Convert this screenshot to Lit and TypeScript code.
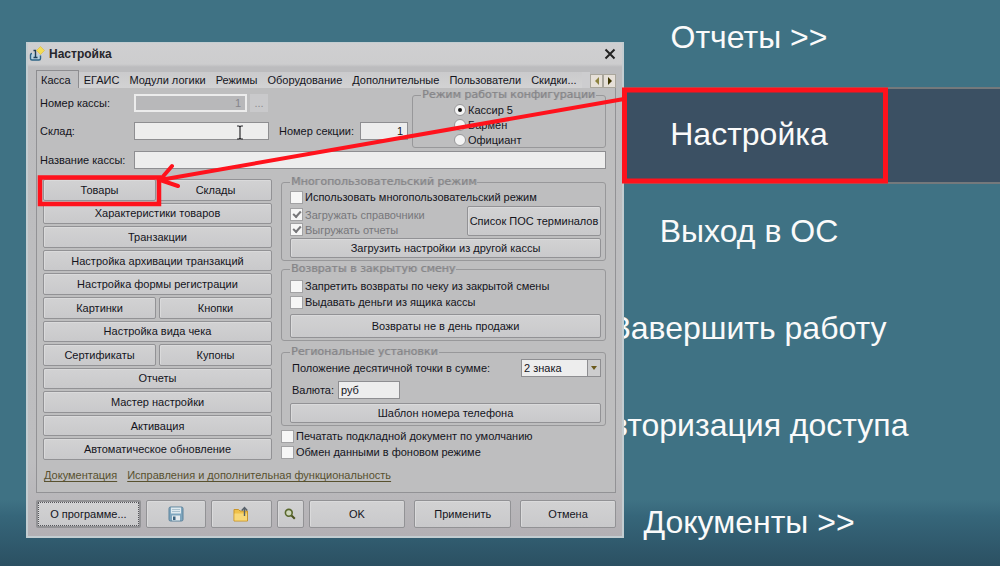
import { LitElement, html, css, svg } from "lit";
import { customElement, state } from "lit/decorators.js";
import { classMap } from "lit/directives/class-map.js";

const MENU = ["Отчеты >>", "Настройка", "Выход в ОС", "Завершить работу", "Авторизация доступа", "Документы >>"];
const TABS = ["Касса", "ЕГАИС", "Модули логики", "Режимы", "Оборудование", "Дополнительные", "Пользователи", "Скидки..."];
const MODES = ["Кассир 5", "Бармен", "Официант"];
const ACTIONS: string[][] = [
  ["Товары", "Склады"],
  ["Характеристики товаров"],
  ["Транзакции"],
  ["Настройка архивации транзакций"],
  ["Настройка формы регистрации"],
  ["Картинки", "Кнопки"],
  ["Настройка вида чека"],
  ["Сертификаты", "Купоны"],
  ["Отчеты"],
  ["Мастер настройки"],
  ["Активация"],
  ["Автоматическое обновление"],
];

@customElement("settings-dialog")
export class SettingsDialog extends LitElement {
  @state() private tab = "Касса";

  static styles = css`
    :host {
      display: block;
      box-sizing: border-box;
      padding: 0 6px 8px 8px;
      border: 2px solid #c3cdd1;
      border-width: 1px 2px 2px 2px;
      background: linear-gradient(#cfcfd1 0, #cdcdce 21px, #bcbcbe 24px, #bebec0 85%, #b3b0b4 100%);
      color: #14141c;
      font: 11px/14px "Liberation Sans", Arial, sans-serif;
    }
    button, input, select { font: inherit; color: inherit; box-sizing: border-box; margin: 0; }
    button { padding: 0; cursor: pointer; }
    .title { display: flex; align-items: center; height: 21px; gap: 4px; margin-left: -7px; }
    .title h1 { flex: 1; margin: 0; font: 700 12px/14px "Liberation Sans", sans-serif; color: #26262c; }
    .close { display: flex; border: 0; background: none; }
    .tabs { display: flex; align-items: flex-end; height: 18px; margin: 6px 0 -1px; position: relative; }
    .tab { border: 0; background: linear-gradient(#cacacc, #d2d2d3); height: 16px; padding: 0 5px; white-space: nowrap; }
    .tab.on { height: 18px; background: #bfbfc1; border: 1px solid #8d8d90; border-bottom: 0; padding: 0 7px 0 4px; }
    .fill { flex: 1; height: 16px; background: #cdcdcf; }
    .step { display: grid; place-items: center; flex: none; width: 13px; height: 14px; border: 1px solid #a9a69c; background: #e6e0d8; }
    .panel { border: 1px solid #929295; padding: 0 9px 10px 3px; background: #bebebf; }
    .head { display: flex; gap: 4px; }
    .fields { flex: 1; display: flex; flex-direction: column; gap: 10px; padding-top: 6px; }
    .line { display: flex; align-items: center; height: 18px; }
    .line > .lead { width: 94px; }
    .box { height: 18px; border: 1px solid #8e8e91; background: #ededed; padding: 0 4px; min-width: 0; border-radius: 0; }
    .num { text-align: right; }
    .code { width: 113px; border: 2px solid #ececec; background: #b8b8ba; color: #85858a; }
    .more { width: 18px; height: 18px; margin-left: 3px; border: 0; background: #c9c9cb; color: #8c8c8e; }
    .store { width: 135px; margin-right: 10px; }
    .section { width: 48px; margin-left: auto; }
    .grow { flex: 1; }
    .name { margin-top: 3px; }
    fieldset {
      box-sizing: border-box; margin: 0; min-width: 0; border: 1px solid #98989a; border-radius: 3px; padding: 0 4px 2px 8px;
    }
    legend {
      height: 14px; padding: 0 1px; font: 11px/14px "DejaVu Sans", sans-serif; color: #848487; text-shadow: 1px 0 0 #a4a4a6; white-space: nowrap;
    }
    .modes { width: 194px; padding: 0; }
    .modes legend { margin-left: 8px; }
    .mode { margin-left: 41px; }
    label { display: flex; align-items: center; white-space: nowrap; }
    .mode { height: 15px; gap: 2px; }
    .radio { appearance: none; width: 12px; height: 12px; border: 1px solid #98989a; border-radius: 50%; background: #f4f4f4; display: grid; place-items: center; }
    .radio:checked::before { content: ""; width: 4px; height: 4px; border-radius: 50%; background: #111; }
    .check { appearance: none; width: 13px; height: 13px; margin-right: 2px; background: #f6f6f6; border: 1px solid #a2a2a4; display: grid; place-items: center; flex: none; }
    .check:checked::before { content: ""; width: 6px; height: 3px; border: solid #77777a; border-width: 0 0 2px 2px; transform: translateY(-1px) rotate(-48deg); }
    .tick { height: 16px; }
    .tick.dim { height: 15px; color: #77777b; }
    .btn {
      border: 1px solid #929295; border-radius: 2px; background: linear-gradient(#d2d2d3, #c9c9cb); box-shadow: inset 1px 1px 0 #dadadb; white-space: nowrap; display: grid; place-items: center;
    }
    .body { display: grid; grid-template-columns: 230px minmax(0, 1fr); gap: 9px; margin: 6px 0 0 2px; }
    .actions { display: grid; grid-template-rows: repeat(12, minmax(0, 1fr)); gap: 2px; margin: 4px 0 1px 1px; }
    .pair { display: grid; grid-auto-flow: column; grid-auto-columns: minmax(0, 1fr); gap: 3px; }
    .groups { display: flex; flex-direction: column; }
    .multi { display: flex; height: 30px; margin: 1px 0 2px; }
    .multi div { flex: 1; padding-top: 1px; }
    .multi .btn { width: 134px; }
    .wide { width: 100%; height: 20px; }
    .tall { height: 24px; margin-top: 4px; }
    .returns { margin-top: 1px; padding-top: 2px; }
    .region { margin-top: 4px; }
    .region .line { justify-content: space-between; margin-bottom: 4px; padding-left: 2px; }
    .region .currency { justify-content: flex-start; gap: 4px; }
    .currency .box { width: 62px; padding: 0 2px; }
    .combo { position: relative; width: 80px; height: 18px; }
    .combo select { appearance: none; width: 100%; height: 18px; border: 1px solid #8e8e91; background: linear-gradient(90deg, #ededed 65px, #8e8e91 65px 66px, #cdcdce 66px); padding: 0 2px; border-radius: 0; }
    .combo svg { position: absolute; right: 4px; top: 7px; pointer-events: none; }
    .extra { margin: 2px 0 1px; }
    .links { display: flex; gap: 10px; margin: 7px 0 0 4px; }
    a { color: #58512f; text-decoration: underline; text-underline-offset: 2px; white-space: nowrap; }
    .footer { display: grid; grid-template-columns: 105fr 60fr 61fr 27fr 97fr 101fr 100fr; margin-top: 7px; height: 28px; column-gap: 5px; }
    .apart { margin-left: 4px; }
    .about { outline: 1px dotted #55555a; outline-offset: -3px; border-width: 2px; }
    svg { display: block; }
  `;

  private check(text: string, on = false, off = false) {
    return html`<label class=${classMap({ tick: true, dim: off })}
      ><input class="check" type="checkbox" .checked=${on} ?disabled=${off} />${text}</label
    >`;
  }

  render() {
    return html`
      <div class="title">
        <svg width="16" height="16" viewBox="0 0 16 16">
          <path d="M3 7.500c-1 0-1.500 0.500-1.500 1.500v3.500c0 1 0.500 1.500 1.500 1.500h7c1 0 1.500-0.500 1.500-1.500V9.500" fill="#b9d3e0" stroke="#2d6486" stroke-width="1.400" />
          <path d="M6.500 11.500V4.500H4.500M4.500 11.500h4" fill="none" stroke="#1f3f57" stroke-width="1.400" />
          <path d="M11.500 0.500l4 4-4 4-4-4z" fill="#f3dc55" stroke="#d9b93a" stroke-width="0.600" />
        </svg>
        <h1>Настройка</h1>
        <button class="close" aria-label="Закрыть">
          <svg width="12" height="12" viewBox="0 0 12 12"><path d="M1.500 1.500l9 9M10.500 1.500l-9 9" stroke="#222" stroke-width="2" /></svg>
        </button>
      </div>

      <div class="tabs" role="tablist">
        ${TABS.map(
          (t) => html`<button role="tab" class=${classMap({ tab: true, on: t === this.tab })}
            aria-selected=${t === this.tab} @click=${() => (this.tab = t)}>${t}</button>`
        )}
        <span class="fill"></span>
        <button class="step" aria-label="Назад"><svg width="6" height="8"><path d="M5 0v8L1 4z" fill="#8d8340" /></svg></button>
        <button class="step" aria-label="Вперед"><svg width="6" height="8"><path d="M1 0v8l4-4z" fill="#3d3500" /></svg></button>
      </div>

      <div class="panel">
        <div class="head">
          <div class="fields">
            <div class="line">
              <label class="lead" for="code">Номер кассы:</label>
              <input id="code" class="box num code" value="1" disabled />
              <button class="more" disabled>...</button>
            </div>
            <div class="line">
              <label class="lead" for="store">Склад:</label>
              <input id="store" class="box store" />
              <label for="section">Номер секции:</label>
              <input id="section" class="box num section" value="1" />
            </div>
          </div>
          <fieldset class="modes">
            <legend>Режим работы конфигурации</legend>
            ${MODES.map(
              (m, i) => html`<label class="mode"><input class="radio" type="radio" name="mode" .checked=${i === 0} />${m}</label>`
            )}
          </fieldset>
        </div>
        <div class="line name">
          <label class="lead" for="name">Название кассы:</label>
          <input id="name" class="box grow" />
        </div>

        <div class="body">
          <div class="actions">
            ${ACTIONS.map((row) => html`<div class="pair">${row.map((a) => html`<button class="btn">${a}</button>`)}</div>`)}
          </div>
          <div class="groups">
            <fieldset>
              <legend>Многопользовательский режим</legend>
              ${this.check("Использовать многопользовательский режим")}
              <div class="multi">
                <div>${this.check("Загружать справочники", true, true)} ${this.check("Выгружать отчеты", true, true)}</div>
                <button class="btn">Список ПОС терминалов</button>
              </div>
              <button class="btn wide">Загрузить настройки из другой кассы</button>
            </fieldset>
            <fieldset class="returns">
              <legend>Возвраты в закрытую смену</legend>
              ${this.check("Запретить возвраты по чеку из закрытой смены")}
              ${this.check("Выдавать деньги из ящика кассы")}
              <button class="btn wide tall">Возвраты не в день продажи</button>
            </fieldset>
            <fieldset class="region">
              <legend>Региональные установки</legend>
              <div class="line">
                <label for="digits">Положение десятичной точки в сумме:</label>
                <span class="combo">
                  <select id="digits"><option>2 знака</option></select>
                  <svg width="6" height="4"><path d="M0 0h6L3 4z" fill="#6b5a1c" /></svg>
                </span>
              </div>
              <div class="line currency">
                <label for="currency">Валюта:</label>
                <input id="currency" class="box" value="руб" />
              </div>
              <button class="btn wide">Шаблон номера телефона</button>
            </fieldset>
            <div class="extra">
              ${this.check("Печатать подкладной документ по умолчанию")}
              ${this.check("Обмен данными в фоновом режиме")}
            </div>
          </div>
        </div>
        <div class="links">
          <a href="#docs">Документация</a>
          <a href="#changes">Исправления и дополнительная функциональность</a>
        </div>
      </div>

      <div class="footer">
        <button class="btn about">О программе...</button>
        <button class="btn" aria-label="Сохранить">
          <svg width="16" height="16" viewBox="0 0 16 16">
            <rect x="1" y="1" width="14" height="14" rx="1.500" fill="#7fa6be" stroke="#5c829b" />
            <rect x="3" y="1.500" width="10" height="6" fill="#dfe9ee" />
            <path d="M4 3.500h8M4 5.500h8" stroke="#9db7c6" stroke-width="0.800" />
            <rect x="4" y="9.500" width="8" height="5" fill="#e6ebee" /><rect x="5" y="10.500" width="2.500" height="3.500" fill="#3d6480" />
          </svg>
        </button>
        <button class="btn" aria-label="Загрузить">
          <svg width="16" height="16" viewBox="0 0 16 16">
            <path d="M1 3.500h4.500l1.500 1.500h7.500v10H1z" fill="#efc14b" stroke="#c9952b" />
            <path d="M1.500 7.500h12.500v7H1.500z" fill="#f8d878" />
            <path d="M11.500 10V2M8.800 4.500l2.700-3 2.700 3" fill="none" stroke="#56616b" stroke-width="1.400" />
          </svg>
        </button>
        <button class="btn" aria-label="Поиск">
          <svg width="12" height="12" viewBox="0 0 12 12">
            <circle cx="4.800" cy="4.800" r="3.400" fill="#cfd6bd" stroke="#59682c" stroke-width="1.600" />
            <path d="M7.500 7.500l3.300 3.300" stroke="#4c521f" stroke-width="2" />
          </svg>
        </button>
        <button class="btn">OK</button>
        <button class="btn apart">Применить</button>
        <button class="btn apart">Отмена</button>
      </div>
    `;
  }
}

@customElement("app-root")
export class AppRoot extends LitElement {
  @state() private active = "Настройка";

  static styles = css`
    :host {
      display: block; position: relative; overflow: hidden; min-height: 100vh;
      background: linear-gradient(#3f7284 calc(100% - 66px), #36667a calc(100% - 50px), #2b5062 100%);
    }
    .menu { position: absolute; inset: -10px 0 auto 50%; display: grid; grid-auto-rows: 97px; }
    .item {
      box-sizing: border-box; padding: 0 2px 4px 0; border: solid transparent; border-width: 2px 0; background: none;
      color: #fafafa; font: 32px/40px "Liberation Sans", Arial, sans-serif; white-space: nowrap; cursor: pointer;
    }
    .item.on { background: #3b5063; border-color: #74797c; }
    .dialog { position: absolute; left: 26px; top: 42px; width: calc(60% - 2px); }
    .marks { position: absolute; left: 0; top: 0; pointer-events: none; }
  `;

  render() {
    return html`
      <nav class="menu">
        ${MENU.map(
          (m) => html`<button class=${classMap({ item: true, on: m === this.active })} @click=${() => (this.active = m)}>${m}</button>`
        )}
      </nav>
      <settings-dialog class="dialog"></settings-dialog>
      <svg class="marks" width="1000" height="566" fill="none">
        ${svg`
          <path d="M237 126h2l1 1 1-1h2M240 127v11M237 139h2l1-1 1 1h2" stroke="#2a2a2e" stroke-width="1.200" />
          <g stroke="#ff121c">
            <rect x="624.500" y="90" width="261" height="91" stroke-width="5" />
            <rect x="40" y="177.500" width="119" height="26.500" stroke-width="4.500" />
            <path d="M624 99L160 180M172 166L160 180L178 186" stroke-width="4" stroke-linecap="round" />
          </g>
        `}
      </svg>
    `;
  }
}
